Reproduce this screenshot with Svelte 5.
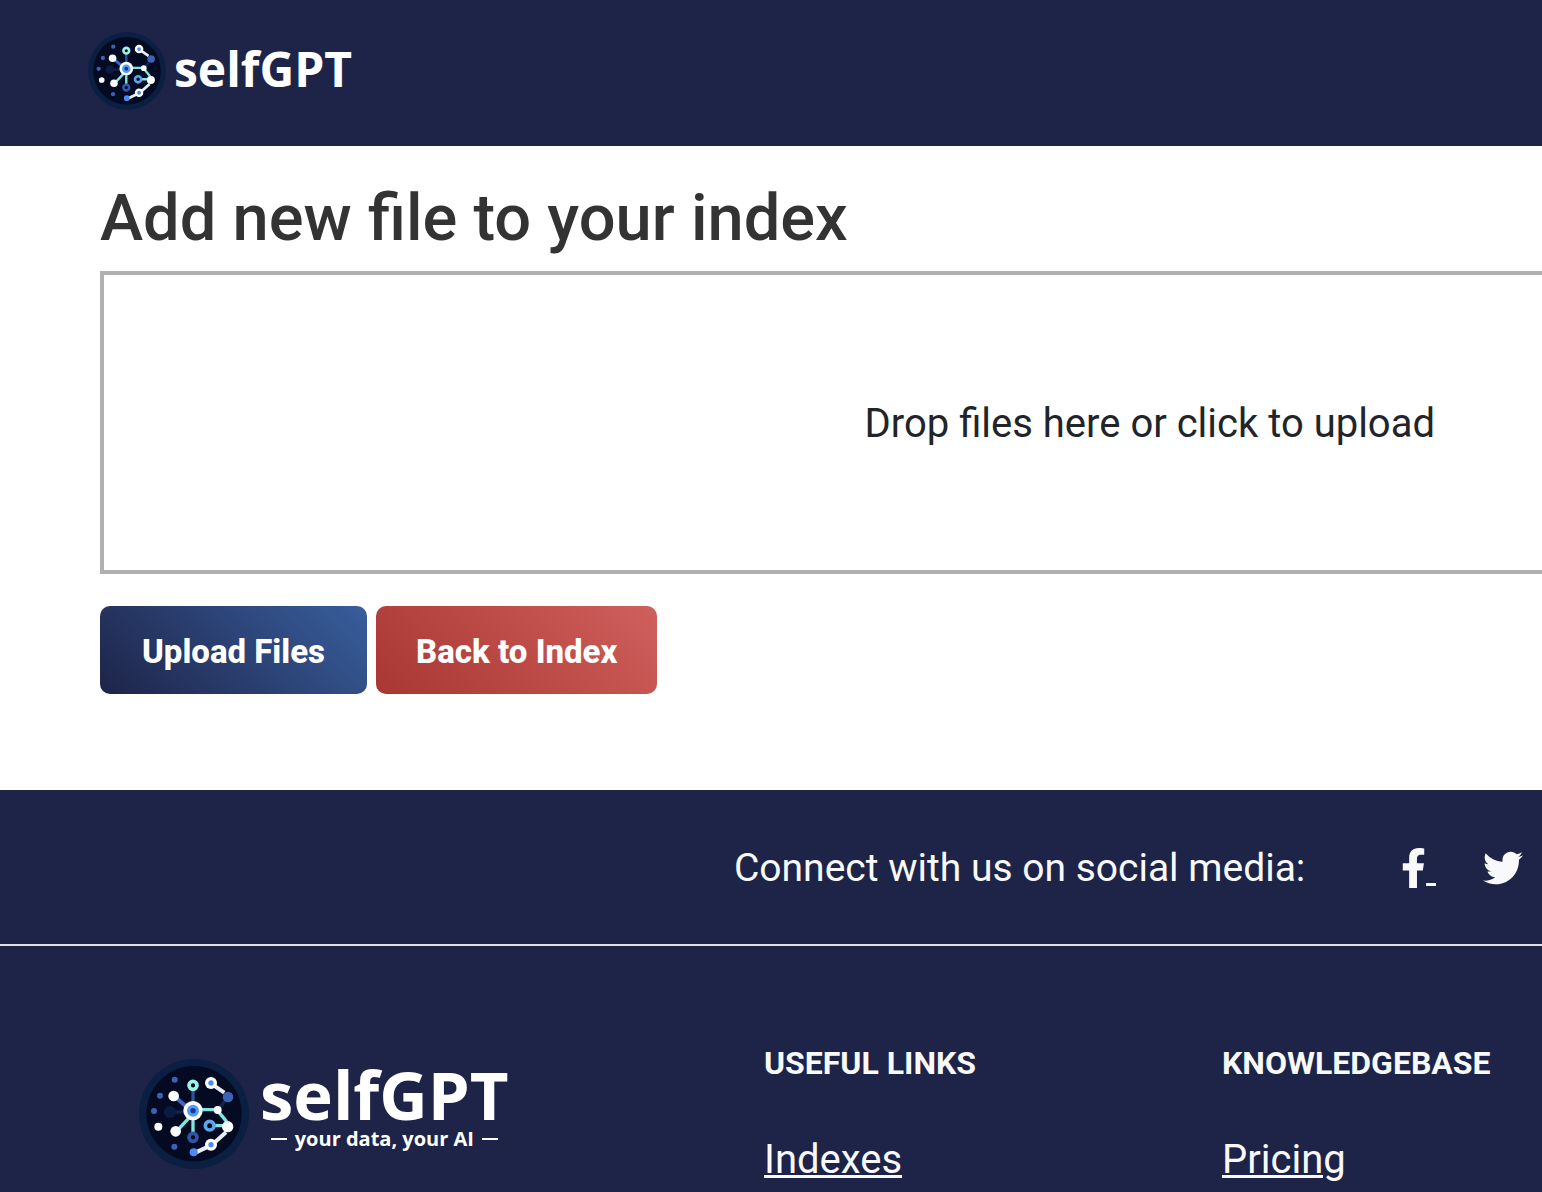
<script lang="ts">
  interface FooterColumn {
    title: string
    links: { label: string; href: string }[]
  }

  const columns: FooterColumn[] = [
    { title: 'Useful links', links: [{ label: 'Indexes', href: '#indexes' }] },
    { title: 'Knowledgebase', links: [{ label: 'Pricing', href: '#pricing' }] },
  ]
</script>

{#snippet emblem()}
  <svg class="emblem" viewBox="41 42 330 330" aria-hidden="true">
    <circle cx="206" cy="207" r="165" fill="#0a1f42" />
    <circle cx="206" cy="206" r="143" fill="#030a22" />
    <g fill="none" stroke-width="10">
      <path d="M134 201H180" stroke="#0d2450" />
      <path d="M203 135V170" stroke="#2d5299" />
      <path d="M308 156L280 192" stroke="#10264f" />
      <path d="M150 156L184 186" stroke="#3a68c4" stroke-width="12" />
      <path d="M203 225V262M228 194H272M281 202L304 230M262 242H300M190 220L160 252" stroke="#7fe6e0" />
      <path d="M265 121L297 143M302 262L266 294M250 304L212 322" stroke="#e8edf5" stroke-width="12" />
    </g>
    <g fill="#3b62b5">
      <circle cx="148" cy="104" r="9" />
      <circle cx="104" cy="152" r="9" />
      <circle cx="86" cy="198" r="9" />
      <circle cx="147" cy="305" r="9" />
      <circle cx="308" cy="156" r="16" />
    </g>
    <circle cx="134" cy="201" r="18" fill="#0b1c42" />
    <g fill="#fff">
      <circle cx="145" cy="153" r="16" />
      <circle cx="99" cy="245" r="12" />
      <circle cx="151" cy="259" r="16" />
      <circle cx="277" cy="195" r="12" />
      <circle cx="307" cy="245" r="17" />
      <circle cx="257" cy="114" r="18" />
      <circle cx="257" cy="299" r="18" />
      <circle cx="203" cy="197" r="29" />
    </g>
    <g fill="#4a8bf5">
      <circle cx="257" cy="114" r="8" />
      <circle cx="257" cy="299" r="8" />
      <circle cx="205" cy="322" r="12" />
    </g>
    <circle cx="203" cy="197" r="18" fill="#549bf7" />
    <circle cx="203" cy="197" r="8" fill="#173a9a" />
    <g fill="#030a22" stroke-width="11">
      <circle cx="203" cy="121" r="12" stroke="#9af5e8" />
      <circle cx="253" cy="242" r="13" stroke="#5ba4e6" />
      <circle cx="203" cy="277" r="12" stroke="#2f57a6" />
    </g>
  </svg>
{/snippet}

<div class="page">
  <header class="topbar">
    <a class="brand" href="#home">
      {@render emblem()}
      <span class="wordmark">selfGPT</span>
    </a>
  </header>

  <main>
    <h1>Add new file to your index</h1>
    <form onsubmit={(e) => e.preventDefault()}>
      <label class="dropzone" for="files">Drop files here or click to upload</label>
      <input id="files" class="file-input" type="file" multiple />
      <div class="actions">
        <button class="btn primary" type="submit">Upload Files</button>
        <a class="btn danger" href="#index">Back to Index</a>
      </div>
    </form>
  </main>

  <footer>
    <section class="social">
      <span class="social-label">Connect with us on social media:</span>
      <a class="facebook" href="#facebook" aria-label="Facebook">
        <svg viewBox="0 0 320 512" aria-hidden="true">
          <path d="M279.14 288l14.22-92.66h-88.91v-60.13c0-25.35 12.42-50.06 52.24-50.06h40.42V6.26S260.43 0 225.36 0c-73.22 0-121.08 44.38-121.08 124.72v70.62H22.89V288h81.39v224h100.17V288z" />
        </svg><span>&nbsp;</span>
      </a>
      <a class="twitter" href="#twitter" aria-label="Twitter">
        <svg viewBox="0 0 512 512" aria-hidden="true">
          <path d="M459.37 151.716c.325 4.548.325 9.097.325 13.645 0 138.72-105.583 298.558-298.558 298.558-59.452 0-114.68-17.219-161.137-47.106 8.447.974 16.568 1.299 25.34 1.299 49.055 0 94.213-16.568 130.274-44.832-46.132-.975-84.792-31.188-98.112-72.772 6.498.974 12.995 1.624 19.818 1.624 9.421 0 18.843-1.3 27.614-3.573-48.081-9.747-84.143-51.98-84.143-102.985v-1.299c13.969 7.797 30.214 12.67 47.431 13.319-28.264-18.843-46.781-51.005-46.781-87.391 0-19.492 5.197-37.36 14.294-52.954 51.655 63.675 129.3 105.258 216.365 109.807-1.624-7.797-2.599-15.918-2.599-24.04 0-57.828 46.782-104.934 104.934-104.934 30.213 0 57.502 12.67 76.67 33.137 23.715-4.548 46.456-13.32 66.599-25.34-7.798 24.366-24.366 44.833-46.132 57.827 21.117-2.273 41.584-8.122 60.426-16.243-14.292 20.791-32.161 39.308-52.628 54.253z" />
        </svg>
      </a>
    </section>

    <section class="columns">
      <div class="brand large">
        {@render emblem()}
        <div class="lockup">
          <span class="wordmark">selfGPT</span>
          <span class="tagline">your data, your AI</span>
        </div>
      </div>
      {#each columns as column}
        <nav aria-label={column.title}>
          <h2>{column.title}</h2>
          {#each column.links as link}
            <a href={link.href}>{link.label}</a>
          {/each}
        </nav>
      {/each}
    </section>
  </footer>
</div>

<style>
  :global(body) { margin: 0; background: #fff; }

  .page {
    display: flex;
    flex-direction: column;
    min-height: 100vh;
    overflow-x: hidden;
    font-family: Roboto, 'Liberation Sans', sans-serif;
    font-size: 40px;
    line-height: 60px;
    color: #212529;
  }

  .topbar { padding: 32px 88px 36px; background: #1e2448; }
  .brand { display: flex; align-items: flex-start; gap: 8px; color: #fff; text-decoration: none; }
  .emblem { flex: none; width: 78px; height: 78px; }
  .wordmark { font: 700 48px/74px 'Open Sans', 'Noto Sans', sans-serif; }

  main { padding: 34px 0 96px 100px; }
  h1 { margin: 0 0 14px; font-size: 65px; font-weight: 500; line-height: 77px; color: #333; }

  .dropzone {
    display: flex;
    align-items: center;
    justify-content: flex-end;
    min-height: 292px;
    padding: 3px 107px 0 0;
    border: 4px solid #b0b0b0;
    border-right: 0;
    cursor: pointer;
  }
  .file-input { position: absolute; width: 1px; height: 1px; opacity: 0; }

  .actions { display: flex; gap: 9px; margin-top: 32px; }
  .btn {
    box-sizing: border-box;
    min-width: 267px;
    padding: 22px 40px 18px;
    border: 0;
    border-radius: 10px;
    font: 800 33px/48px Roboto, sans-serif;
    text-align: center;
    color: #fff;
    text-decoration: none;
    cursor: pointer;
  }
  .primary { background: linear-gradient(45deg, #1e2448, #385e9d); }
  .danger { background: linear-gradient(45deg, #a83632, #d0605d); }

  footer { flex: 1; background: #1e2448; color: #f8f9fa; }
  footer a { color: inherit; }

  .social {
    display: flex;
    align-items: center;
    justify-content: flex-end;
    padding: 48px 19px 46px 100px;
    border-bottom: 2px solid #dee2e6;
    font-size: 39px;
  }
  .social-label { margin-right: 96px; }
  .social a { display: flex; align-items: center; }
  .social svg { height: 40px; fill: currentColor; }
  .facebook { margin-right: 47px; }
  .facebook span { text-decoration: underline; }

  .columns {
    display: grid;
    grid-template-columns: 625fr 458fr 320fr;
    padding: 98px 0 0 139px;
  }
  .large { gap: 11px; padding-top: 15px; }
  .large .emblem { width: 110px; height: 110px; }
  .large .wordmark { font-size: 67px; line-height: 70px; }
  .lockup { display: flex; flex-direction: column; align-items: center; }
  .tagline {
    display: flex;
    align-items: center;
    gap: 8px;
    font: 700 20px/20px 'Open Sans', 'Noto Sans', sans-serif;
  }
  .tagline::before, .tagline::after { content: ''; width: 16px; height: 2px; background: #fff; }

  h2 { margin: 0 0 48px; font-size: 32px; font-weight: 700; line-height: 38px; text-transform: uppercase; }
  nav a { display: block; text-underline-offset: 2px; text-decoration-thickness: 3px; }
</style>
